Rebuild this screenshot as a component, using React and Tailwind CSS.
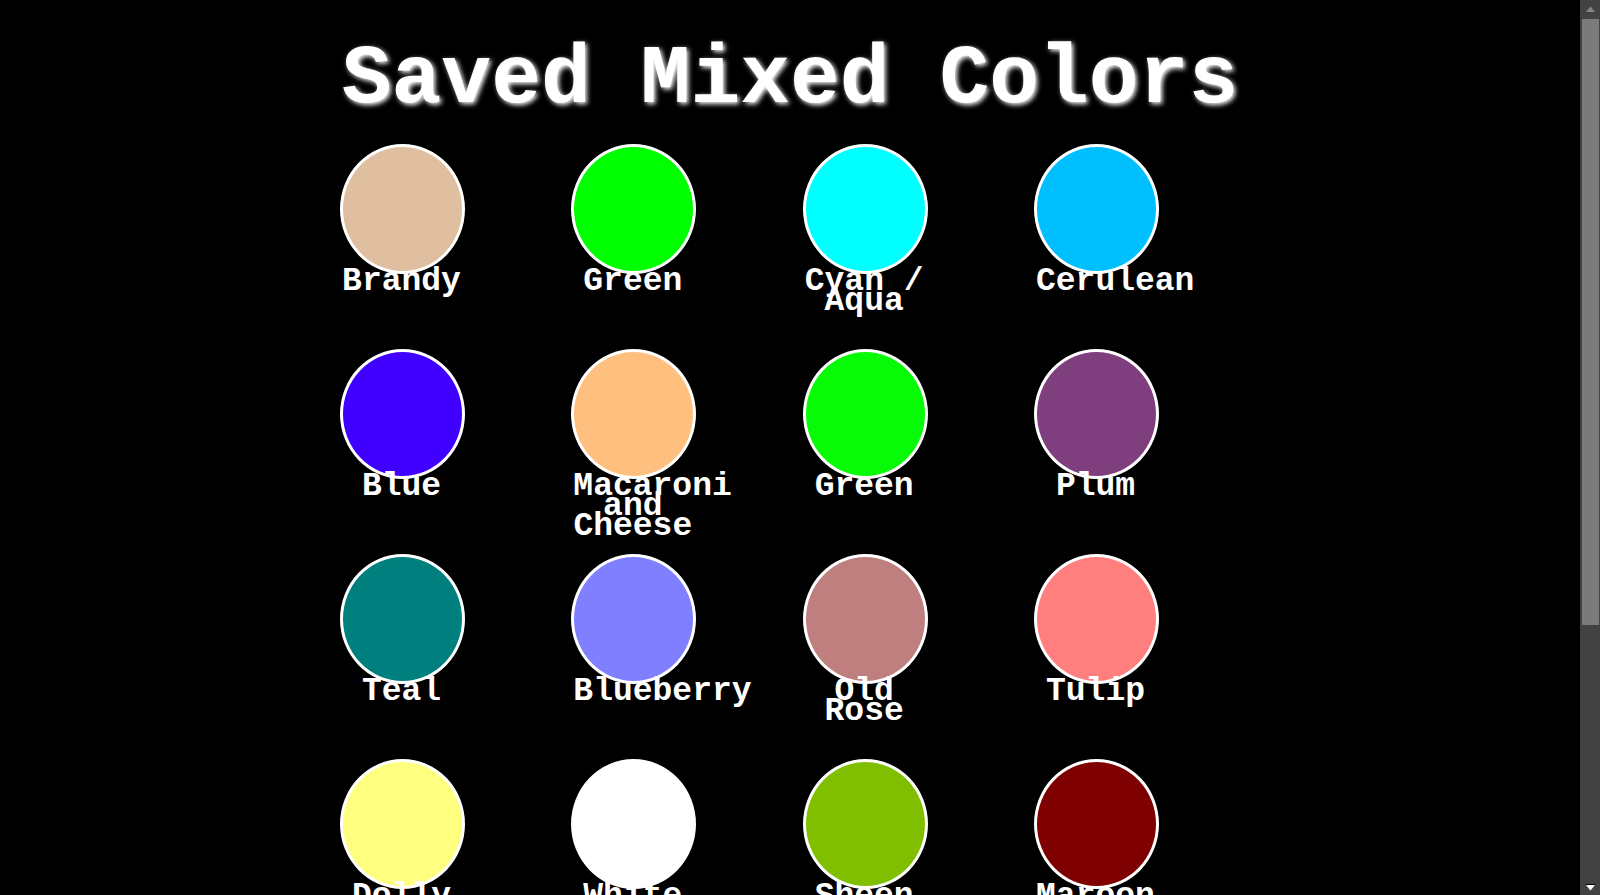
const swatches = [
  { name: "Brandy", color: "#dfbf9f" },
  { name: "Green", color: "#00ff00" },
  { name: "Cyan / Aqua", color: "#00ffff" },
  { name: "Cerulean", color: "#00bfff" },
  { name: "Blue", color: "#3f00ff" },
  { name: "Macaroni and Cheese", color: "#ffbf7f" },
  { name: "Green", color: "#07fb07" },
  { name: "Plum", color: "#7f3f7f" },
  { name: "Teal", color: "#007f7f" },
  { name: "Blueberry", color: "#7f7fff" },
  { name: "Old Rose", color: "#bf7f7f" },
  { name: "Tulip", color: "#ff7f7f" },
  { name: "Dolly", color: "#ffff7f" },
  { name: "White", color: "#ffffff" },
  { name: "Sheen Green", color: "#7fbf00" },
  { name: "Maroon", color: "#7f0000" },
];

function Swatch({ id, name, color }) {
  return (
    <li className="flex w-[125px] flex-col">
      <button
        type="button"
        aria-labelledby={id}
        className="h-[130px] w-full rounded-[50%] border-3 border-white"
        style={{ backgroundColor: color }}
      />
      <span id={id} className="-mt-0.5 ml-0.5 w-[119px] text-center text-[33px] leading-5 font-bold">
        {name}
      </span>
    </li>
  );
}

function ScrollRail() {
  return (
    <div aria-hidden="true" className="flex w-5 shrink-0 flex-col bg-[#424242]">
      <svg viewBox="0 0 20 19" className="h-[19px] w-5 shrink-0">
        <path d="M6 12h9l-4.5-5.5z" fill="#868686" />
      </svg>
      <div className="mr-px ml-0.5 h-[67.7%] bg-[#7b7b7b]" />
      <svg viewBox="0 0 20 19" className="mt-auto h-[19px] w-5 shrink-0">
        <path d="M5.5 8h10v1h-10z" fill="#000000" />
        <path d="M6 9h9l-4.5 5.5z" fill="#ffffff" />
      </svg>
    </div>
  );
}

export default function App() {
  return (
    <div className="flex h-screen bg-black font-['Liberation_Mono',monospace] text-white">
      <main className="min-w-0 flex-1 overflow-hidden">
        <div className="mx-auto w-full max-w-[900px] pt-10">
          <h1 className="text-center text-[83px] leading-20 font-bold whitespace-nowrap [text-shadow:2px_2px_5px_#ffffff]">
            Saved Mixed Colors
          </h1>
          <ul className="mt-6 grid max-w-[819px] auto-rows-[205px] grid-cols-[repeat(4,125px)] justify-between">
            {swatches.map((swatch, index) => (
              <Swatch key={index} id={`swatch-${index}`} {...swatch} />
            ))}
          </ul>
        </div>
      </main>
      <ScrollRail />
    </div>
  );
}
